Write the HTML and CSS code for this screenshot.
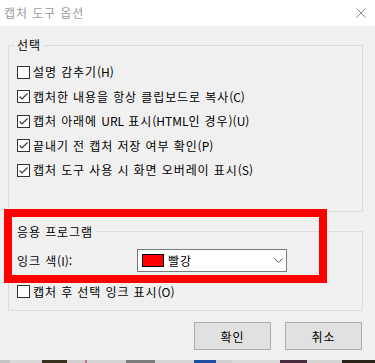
FILE: index.html
```html
<!DOCTYPE html>
<html lang="ko">
<head>
<meta charset="utf-8">
<title>캡처 도구 옵션</title>
<link rel="stylesheet" href="styles.css">
</head>
<body>
<div class="window">
  <div class="titlebar">
    <span class="title">캡처 도구 옵션</span>
    <svg class="close" viewBox="0 0 10 10"><path d="M0.5 0.5 L9.5 9.5 M9.5 0.5 L0.5 9.5"/></svg>
  </div>
  <div class="body">
    <fieldset class="group g1">
      <legend>선택</legend>
      <div class="row"><span class="cb"></span><span>설명 감추기<span class="lat">(H)</span></span></div>
      <div class="row"><span class="cb"><svg viewBox="0 0 11 11"><polyline points="1.5,5.5 4,8 9.5,2.5"/></svg></span><span>캡처한 내용을 항상 클립보드로 복사<span class="lat">(C)</span></span></div>
      <div class="row"><span class="cb"><svg viewBox="0 0 11 11"><polyline points="1.5,5.5 4,8 9.5,2.5"/></svg></span><span>캡처 아래에 <span class="lat">URL</span> 표시<span class="lat">(HTML</span>인 경우<span class="lat">)(U)</span></span></div>
      <div class="row"><span class="cb"><svg viewBox="0 0 11 11"><polyline points="1.5,5.5 4,8 9.5,2.5"/></svg></span><span>끝내기 전 캡처 저장 여부 확인<span class="lat">(P)</span></span></div>
      <div class="row"><span class="cb"><svg viewBox="0 0 11 11"><polyline points="1.5,5.5 4,8 9.5,2.5"/></svg></span><span>캡처 도구 사용 시 화면 오버레이 표시<span class="lat">(S)</span></span></div>
    </fieldset>
    <fieldset class="group g2">
      <legend>응용 프로그램</legend>
      <div class="ink-row">
        <span class="ink-label">잉크 색<span class="lat">(I):</span></span>
        <div class="select">
          <span class="swatch"></span>
          <span class="sel-text">빨강</span>
          <svg class="chev" viewBox="0 0 9 5"><polyline points="0.5,0.5 4.5,4.5 8.5,0.5"/></svg>
        </div>
      </div>
      <div class="row"><span class="cb"></span><span>캡처 후 선택 잉크 표시<span class="lat">(O)</span></span></div>
    </fieldset>
    <div class="buttons">
      <button class="btn">확인</button>
      <button class="btn">취소</button>
    </div>
  </div>
  <div class="strip">
    <span class="s s1"></span><span class="s s2"></span><span class="s s3"></span><span class="s s4"></span><span class="s s5"></span><span class="s s6"></span><span class="s s7"></span><span class="s s8"></span><span class="s s9"></span><span class="s s10"></span><span class="s s11"></span><span class="s s12"></span><span class="s s13"></span><span class="s s14"></span>
  </div>
  <div class="highlight"></div>
</div>
</body>
</html>
```

FILE: styles.css
```css
* { box-sizing: border-box; }
html, body { margin: 0; padding: 0; }
body {
  width: 375px;
  height: 363px;
  overflow: hidden;
  font-family: "Noto Sans CJK KR", "Malgun Gothic", sans-serif;
  font-size: 12px;
  letter-spacing: 0.9px;
  color: #000;
  background: #f0f0f0;
}
.lat { letter-spacing: 0; }
.window {
  position: relative;
  width: 375px;
  height: 363px;
  display: flex;
  flex-direction: column;
}
.titlebar {
  flex: none;
  height: 26px;
  background: #fff;
  display: flex;
  align-items: center;
  justify-content: space-between;
  padding: 0 9px 0 4px;
}
.title { color: #9c9c9c; line-height: 16px; }
.close {
  width: 10px;
  height: 10px;
  fill: none;
  stroke: #8c8c8c;
  stroke-width: 1;
}
.body {
  flex: 1;
  background: #f0f0f0;
  padding: 11px 12px 0 8px;
}
.group {
  margin: 0;
  min-width: 0;
  border: 1px solid #dcdcdc;
  padding: 7px 8px 28px;
}
.group legend {
  padding: 0 3px;
  margin-left: -3px;
  line-height: 16px;
}
.g2 {
  margin-top: 12px;
  padding: 9px 8px 6px;
}
.row {
  display: flex;
  align-items: center;
  height: 24.5px;
  line-height: 16px;
}
.cb {
  flex: none;
  width: 13px;
  height: 13px;
  border: 1px solid #333;
  background: #fff;
  margin-right: 3px;
  display: flex;
}
.cb svg {
  width: 11px;
  height: 11px;
  fill: none;
  stroke: #333;
  stroke-width: 1.1;
}
.ink-row {
  display: flex;
  align-items: center;
  height: 23px;
  margin-bottom: 8px;
}
.ink-label { width: 120px; flex: none; }
.select {
  width: 150px;
  height: 23px;
  border: 1px solid #7a7a7a;
  background: #fff;
  display: flex;
  align-items: center;
  padding-left: 4px;
}
.swatch {
  width: 22px;
  height: 13px;
  border: 1px solid #000;
  background: #ff0000;
  margin-right: 4px;
}
.chev {
  width: 9px;
  height: 5px;
  margin-left: auto;
  margin-right: 3px;
  fill: none;
  stroke: #555;
  stroke-width: 1;
}
.buttons {
  display: flex;
  justify-content: flex-end;
  gap: 14px;
  margin-top: 11px;
  padding-right: 1px;
}
.btn {
  width: 77px;
  height: 28px;
  padding: 0;
  border: 1px solid #adadad;
  background: #e1e1e1;
  font: inherit;
  letter-spacing: 0.9px;
  color: #000;
}
.strip {
  flex: none;
  height: 3px;
  display: flex;
}
.s { height: 3px; }
.s1 { width: 10px; background: #c4c4c4; }
.s2 { width: 32px; background: #d8d8d8; }
.s3 { width: 25px; background: #3b3020; }
.s4 { width: 18px; background: #d0d0d0; }
.s5 { width: 2px; background: #c07090; }
.s6 { width: 39px; background: #d4d4d4; }
.s7 { width: 29px; background: #7c7c7c; }
.s8 { width: 39px; background: #d6d6d6; }
.s9 { width: 22px; background: #1f4fa0; }
.s10 { width: 16px; background: #cfcfcf; }
.s11 { width: 48px; background: #dadada; }
.s12 { width: 27px; background: #4a2c40; }
.s13 { width: 35px; background: #d4d4d4; }
.s14 { width: 33px; background: #2a2418; }
.highlight {
  position: absolute;
  left: 4px;
  top: 209px;
  width: 323px;
  height: 74px;
  border: 8px solid #ff0000;
}
```
